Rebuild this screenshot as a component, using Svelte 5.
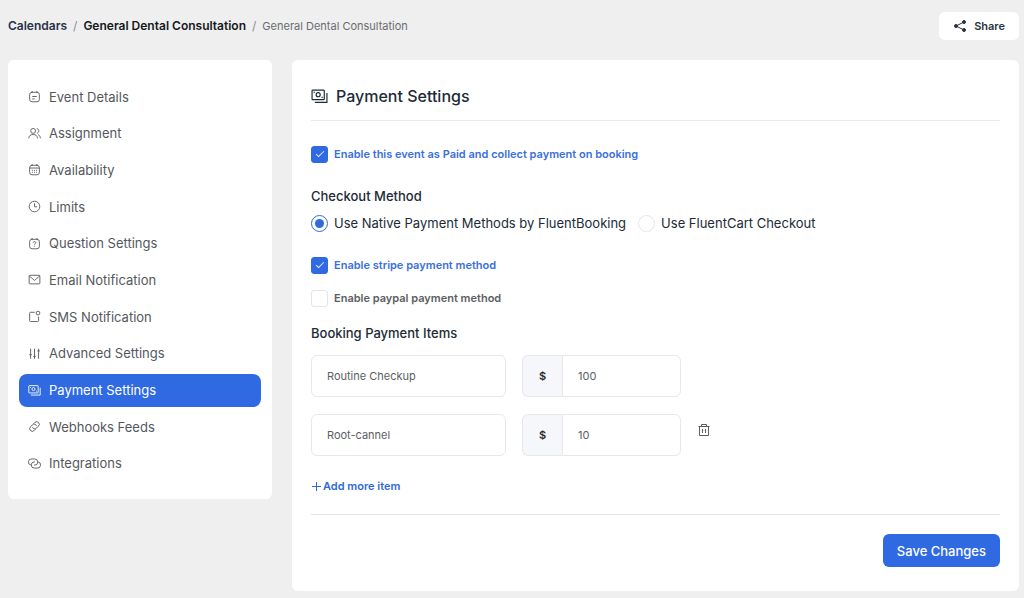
<script>
  let checkout = $state("native");
  let paid = $state(true);
  let stripe = $state(true);
  let paypal = $state(false);
  let items = $state([
    { title: "Routine Checkup", value: "100" },
    { title: "Root-cannel", value: "10" }
  ]);

  const money = `<rect x="1" y="2" width="11.5" height="9" rx="0.6"></rect><circle cx="6.75" cy="6.3" r="1.9"></circle><path d="M3 3.6v1.2M10.5 8.2v1.2M15 4.6v9H3.6"></path>`;

  const menu = [
    {
      label: "Event Details",
      icon: `<rect x="2" y="2.8" width="12" height="11.7" rx="3"></rect><path d="M5 1.2v2.6M11 1.2v2.6M5.2 8h5.6M5.2 11h3"></path>`
    },
    {
      label: "Assignment",
      icon: `<circle cx="6.3" cy="4.8" r="3"></circle><path d="M1 14c0-3 2-4.8 5.3-4.8s5.3 1.8 5.3 4.8M10.8 2c3.3.3 3.3 5.2 0 5.6M12.5 9.5c1.8.7 2.7 2.3 2.7 4.5"></path>`
    },
    {
      label: "Availability",
      icon: `<rect x="2" y="2.8" width="12" height="11.7" rx="3"></rect><path d="M5 1.2v2.6M11 1.2v2.6M2 6.2h12"></path><path d="M4.8 9h1.2M7.4 9h1.2M10 9h1.2M4.8 11.4h1.2M7.4 11.4h1.2M10 11.4h1.2"></path>`
    },
    {
      label: "Limits",
      icon: `<circle cx="8" cy="8" r="6.5"></circle><path d="M8 4.2V8.3h3.2"></path>`
    },
    {
      label: "Question Settings",
      icon: `<rect x="2" y="2.8" width="12" height="11.7" rx="3"></rect><path d="M5 1.2v2.6M11 1.2v2.6M6.4 7c.2-1.8 3.2-1.7 3.2 0 0 1-1.6 1.1-1.6 2.4M8 10.8v1"></path>`
    },
    {
      label: "Email Notification",
      icon: `<rect x="1.4" y="2.8" width="13.2" height="10.6" rx="1"></rect><path d="M1.6 3.6 8 9.2l6.4-5.6"></path>`
    },
    {
      label: "SMS Notification",
      icon: `<path d="M8.3 2.8H3.2c-.8 0-1.2.4-1.2 1.2v9c0 .8.4 1.2 1.2 1.2h8.6c.8 0 1.2-.4 1.2-1.2V8.2"></path><circle cx="12.3" cy="3.8" r="2.3"></circle>`
    },
    {
      label: "Advanced Settings",
      icon: `<path d="M3.2 2v12.5M8 2v12.5M13 2v12.5M1.6 9.5h3.2M6.4 11.5h3.2M11.4 4.8h3.2"></path>`
    },
    { label: "Payment Settings", icon: money, active: true },
    {
      label: "Webhooks Feeds",
      icon: `<g transform="rotate(-45 8 8)"><path d="M6.5 11.2H4.2a3.2 3.2 0 0 1 0-6.4h3.3a3.2 3.2 0 0 1 3 4.3"></path><path d="M9.5 4.8h2.3a3.2 3.2 0 0 1 0 6.4H8.5a3.2 3.2 0 0 1-3-4.3"></path></g>`
    },
    {
      label: "Integrations",
      icon: `<path d="M3.6 9.9A3.8 3.8 0 0 1 4.8 2.4h3.4a3.8 3.8 0 0 1 0 7.6H7.4"></path><path d="M12.4 6.1a3.8 3.8 0 0 1-1.2 7.5H7.8a3.8 3.8 0 0 1 0-7.6h.8"></path>`
    }
  ];

  function addItem() {
    items.push({ title: "", value: "" });
  }

  function removeItem(index) {
    items.splice(index, 1);
  }
</script>

<div class="page">
  <header class="topbar">
    <nav class="breadcrumb" aria-label="Breadcrumb">
      <a class="root" href="#calendars">Calendars</a>
      <span class="sep">/</span>
      <a href="#calendar">General Dental Consultation</a>
      <span class="sep">/</span>
      <span class="current">General Dental Consultation</span>
    </nav>
    <button class="share" type="button">
      <svg width="14" height="14" viewBox="0 0 14 14" fill="currentColor" stroke="currentColor">
        <path d="M11 3 3 7l8 4" fill="none" stroke-width="1"></path>
        <circle cx="11" cy="3" r="1.5"></circle>
        <circle cx="3" cy="7" r="1.5"></circle>
        <circle cx="11" cy="11" r="1.5"></circle>
      </svg>
      Share
    </button>
  </header>

  <div class="layout">
    <nav class="sidebar card" aria-label="Event settings">
      <ul>
        {#each menu as item}
          <li>
            <a href="#settings" class:active={item.active}>
              <svg width="13" height="13" viewBox="0 0 16 16" fill="none" stroke="currentColor" stroke-width="1.1">
                {@html item.icon}
              </svg>
              {item.label}
            </a>
          </li>
        {/each}
      </ul>
    </nav>

    <main class="content card">
      <div class="title">
        <svg width="17" height="17" viewBox="0 0 16 16" fill="none" stroke="currentColor" stroke-width="1.1">
          {@html money}
        </svg>
        <h1>Payment Settings</h1>
      </div>

      <label class="check paid" class:on={paid}>
        <input type="checkbox" bind:checked={paid} />
        Enable this event as Paid and collect payment on booking
      </label>

      <h2 id="checkout-method">Checkout Method</h2>
      <div class="radios" role="radiogroup" aria-labelledby="checkout-method">
        <label>
          <input type="radio" name="checkout" value="native" bind:group={checkout} />
          Use Native Payment Methods by FluentBooking
        </label>
        <label>
          <input type="radio" name="checkout" value="fluentcart" bind:group={checkout} />
          Use FluentCart Checkout
        </label>
      </div>

      <div class="methods">
        <label class="check" class:on={stripe}>
          <input type="checkbox" bind:checked={stripe} />
          Enable stripe payment method
        </label>
        <label class="check" class:on={paypal}>
          <input type="checkbox" bind:checked={paypal} />
          Enable paypal payment method
        </label>
      </div>

      <h2>Booking Payment Items</h2>
      <div class="items">
        {#each items as item, i}
          <div class="item">
            <input class="name" type="text" aria-label="Item name" bind:value={item.title} />
            <label class="price">
              <span>$</span>
              <input type="text" aria-label="Item price" bind:value={item.value} />
            </label>
            {#if i > 0}
              <button class="remove" type="button" aria-label="Remove item" onclick={() => removeItem(i)}>
                <svg width="14" height="14" viewBox="0 0 14 14" fill="none" stroke="currentColor">
                  <path d="M1.5 3.5h11M4.5 3.5v-2h5v2M2.5 3.5v9h9v-9M5.5 6v4M8.5 6v4"></path>
                </svg>
              </button>
            {/if}
          </div>
        {/each}
      </div>

      <button class="add" type="button" onclick={addItem}>
        <svg width="11" height="11" viewBox="0 0 11 11" fill="none" stroke="currentColor">
          <path d="M5.5 1v9M1 5.5h9"></path>
        </svg>
        Add more item
      </button>

      <footer>
        <button class="save" type="button">Save Changes</button>
      </footer>
    </main>
  </div>
</div>

<style>
  :global(body) {
    background: #efefef;
  }

  .page {
    font-family: Inter, "Liberation Sans", sans-serif;
    font-size: 13px;
    line-height: 20px;
    color: #202b36;
    padding: 0 5px 7px 8px;
  }

  .page :global(*) {
    box-sizing: border-box;
  }

  svg {
    flex-shrink: 0;
  }

  a {
    color: inherit;
    text-decoration: none;
  }

  button,
  input {
    font: inherit;
    color: inherit;
    margin: 0;
  }

  button {
    border: 0;
    padding: 0;
    background: none;
    cursor: pointer;
  }

  .topbar {
    display: flex;
    align-items: center;
    justify-content: space-between;
    padding: 12px 0 20px;
  }

  .breadcrumb {
    display: flex;
    gap: 6px;
    font-size: 12px;
    font-weight: 600;
    color: #15181c;
  }

  .breadcrumb .root {
    color: #28324a;
  }

  .breadcrumb .sep {
    font-weight: 400;
    color: #8b8e93;
  }

  .breadcrumb .current {
    font-size: 11px;
    font-weight: 400;
    color: #696c70;
  }

  .share {
    display: flex;
    align-items: center;
    gap: 7px;
    padding: 4px 14px;
    font-size: 11px;
    font-weight: 600;
    color: #2a343e;
    background: #fff;
    border-radius: 6px;
  }

  .layout {
    display: flex;
    align-items: flex-start;
    gap: 20px;
  }

  .card {
    background: #fff;
    border-radius: 6px;
  }

  .sidebar {
    flex: 0 0 264px;
    padding: 20px 11px 19px;
  }

  .sidebar ul {
    list-style: none;
    margin: 0;
    padding: 0;
    min-height: 400px;
    display: flex;
    flex-direction: column;
    justify-content: space-between;
  }

  .sidebar a {
    display: flex;
    align-items: center;
    gap: 8px;
    height: 33px;
    padding: 0 9px;
    color: #54585d;
    border-radius: 8px;
  }

  .sidebar a.active {
    color: #fff;
    background: #2f6ae3;
  }

  .content {
    flex: 1;
    min-width: 0;
    padding: 24px 19px;
  }

  .title {
    display: flex;
    align-items: center;
    gap: 8px;
    padding-bottom: 12px;
    border-bottom: 1px solid #e9eaec;
  }

  h1 {
    margin: 0;
    font-size: 16px;
    line-height: 24px;
    font-weight: 500;
  }

  h2 {
    margin: 0;
    font-size: 13px;
    line-height: 20px;
    font-weight: 500;
  }

  .check,
  .radios label {
    display: flex;
    align-items: center;
    gap: 6px;
  }

  .check {
    font-size: 11px;
    font-weight: 600;
    color: #5b5e63;
  }

  .check.on {
    color: #3a70dc;
  }

  .paid {
    margin: 23px 0 22px;
  }

  input[type="checkbox"],
  input[type="radio"] {
    appearance: none;
    flex-shrink: 0;
    width: 17px;
    height: 17px;
    background: #fff;
    border: 1px solid #e3e5e8;
    border-radius: 3px;
    display: grid;
    place-items: center;
  }

  input[type="checkbox"]:checked {
    background: #2f6ae3;
    border-color: #2f6ae3;
  }

  input[type="checkbox"]:checked::before {
    content: "";
    width: 7px;
    height: 3px;
    border: solid #dfe9fb;
    border-width: 0 0 1px 1px;
    transform: translateY(-1px) rotate(-45deg);
  }

  input[type="radio"] {
    border-radius: 50%;
  }

  input[type="radio"]:checked {
    border-color: #2f6ae3;
  }

  input[type="radio"]:checked::before {
    content: "";
    width: 9px;
    height: 9px;
    border-radius: 50%;
    background: #2f6ae3;
  }

  .radios {
    display: flex;
    flex-wrap: wrap;
    gap: 12px;
    margin: 7px 0 22px;
  }

  .methods {
    display: flex;
    flex-direction: column;
    gap: 13px;
    margin-bottom: 15px;
  }

  .items {
    display: flex;
    flex-direction: column;
    gap: 17px;
    margin: 12px 0 20px;
  }

  .item {
    display: flex;
    gap: 16px;
    font-size: 11px;
    color: #5b5e63;
  }

  .item input {
    min-width: 0;
    height: 42px;
    padding: 0 15px;
    background: #fff;
    border: 1px solid #e6e8eb;
    border-radius: 6px;
  }

  .item .name {
    width: 195px;
  }

  .price {
    display: flex;
    width: 159px;
  }

  .price span {
    width: 40px;
    display: flex;
    align-items: center;
    justify-content: center;
    font-weight: 600;
    color: #2a2e33;
    background: #f5f7fa;
    border: 1px solid #e6e8eb;
    border-right: 0;
    border-radius: 6px 0 0 6px;
  }

  .price input {
    flex: 1;
    border-radius: 0 6px 6px 0;
  }

  .remove {
    align-self: flex-start;
    display: flex;
    padding: 9px 0;
  }

  .add {
    display: flex;
    align-items: center;
    gap: 1px;
    font-size: 11px;
    font-weight: 600;
    color: #2f6ad9;
  }

  footer {
    display: flex;
    justify-content: flex-end;
    margin-top: 18px;
    padding-top: 19px;
    border-top: 1px solid #e4e5e7;
  }

  .save {
    height: 33px;
    padding: 0 14px;
    font-weight: 500;
    color: #fff;
    background: #2f6ae3;
    border-radius: 6px;
  }
</style>
